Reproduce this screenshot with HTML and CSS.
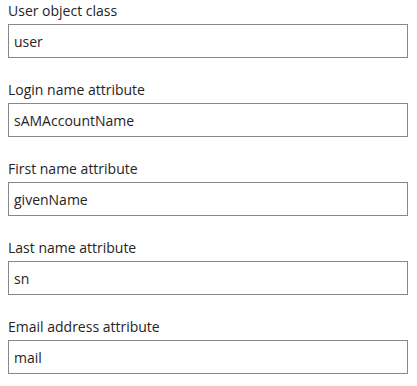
FILE: index.html
```html
<!DOCTYPE html>
<html lang="en">
<head>
  <meta charset="UTF-8">
  <title>LDAP attribute mapping</title>
  <link rel="stylesheet" href="styles.css">
</head>
<body>

<form class="mapping">
  <div class="field">
    <label for="objclass">User object class</label>
    <input id="objclass" type="text" value="user">
  </div>
  <div class="field">
    <label for="login">Login name attribute</label>
    <input id="login" type="text" value="sAMAccountName">
  </div>
  <div class="field">
    <label for="first">First name attribute</label>
    <input id="first" type="text" value="givenName">
  </div>
  <div class="field">
    <label for="last">Last name attribute</label>
    <input id="last" type="text" value="sn">
  </div>
  <div class="field">
    <label for="email">Email address attribute</label>
    <input id="email" type="text" value="mail">
  </div>
</form>

</body>
</html>
```

FILE: styles.css
```css
body {
  font-family: 'Open Sans', 'Segoe UI', Arial, sans-serif;
  background: #ffffff;
  color: #252423;
  margin: 0;
  padding: 0 9px 0 8px;
}
.mapping {
  display: flex;
  flex-direction: column;
  gap: 21px;
}
.field label {
  display: block;
  font-size: 14px;
  line-height: 22px;
  height: 22px;
  margin-bottom: 2px;
}
.field input {
  display: block;
  box-sizing: border-box;
  width: 100%;
  height: 34px;
  margin: 0;
  padding: 0 5px;
  border: 1px solid #8a8886;
  border-radius: 0;
  font-family: inherit;
  font-size: 14px;
  color: #252423;
  background: #fff;
  outline: none;
}
```
